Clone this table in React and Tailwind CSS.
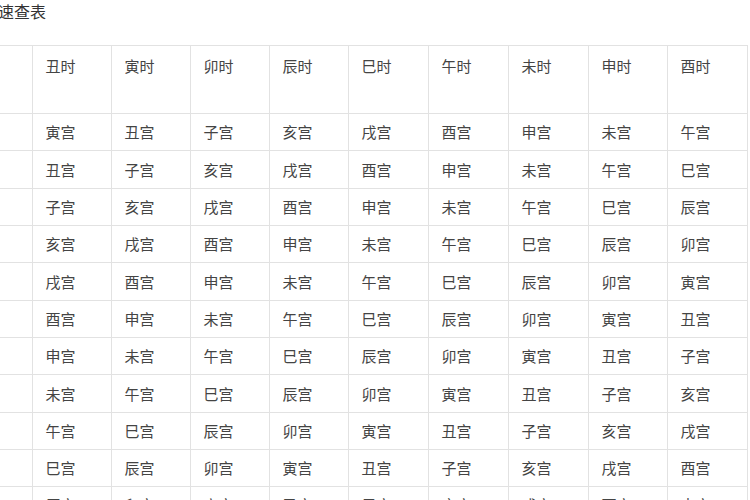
import React from "react";

const heads = ["丑时", "寅时", "卯时", "辰时", "巳时", "午时", "未时", "申时", "酉时"];
const order = ["寅", "丑", "子", "亥", "戌", "酉", "申", "未", "午", "巳", "辰", "卯"];
const widths = ["w-[79px]", "w-[79px]", "w-[79px]", "w-[79px]", "w-[80px]", "w-[80px]", "w-[80px]", "w-[79px]", "w-[80px]"];
const heights = ["h-[37px]", "h-[38px]", "h-[37px]", "h-[37px]", "h-[38px]", "h-[37px]", "h-[37px]", "h-[38px]", "h-[37px]", "h-[37px]", "h-[37px]"];

function rowData(r) {
  const out = [];
  for (let c = 0; c < 9; c++) out.push(order[(r + c) % 12] + "宫");
  return out;
}

export default function App() {
  return (
    <div
      className="w-[750px] h-[500px] overflow-hidden bg-white relative"
      style={{ fontFamily: '"Noto Sans CJK SC", "Noto Sans", sans-serif' }}
    >
      <div className="h-[45px] pt-0 -ml-[2px] text-[16px] leading-[22px] text-[#333333]">
        速查表
      </div>
      <table className="border-collapse table-fixed text-[15px] text-[#444444]">
        <thead>
          <tr className="h-[68px]">
            <td className="w-[32px] border border-[#e2e2e2] border-l-0 align-top"></td>
            {heads.map((h, i) => (
              <td key={h} className={`${widths[i]} border border-[#e2e2e2] align-top pl-[13px] pt-[9px] leading-[22px]`}>
                {h}
              </td>
            ))}
          </tr>
        </thead>
        <tbody>
          {heights.map((hc, r) => (
            <tr key={r} className={hc}>
              <td className="border border-[#e2e2e2] border-l-0"></td>
              {rowData(r).map((t, c) => (
                <td key={c} className={`border border-[#e2e2e2] pl-[13px] leading-[20px] ${r === 10 ? "align-top pt-[8px]" : "align-middle"}`}>
                  {t}
                </td>
              ))}
            </tr>
          ))}
        </tbody>
      </table>
    </div>
  );
}
